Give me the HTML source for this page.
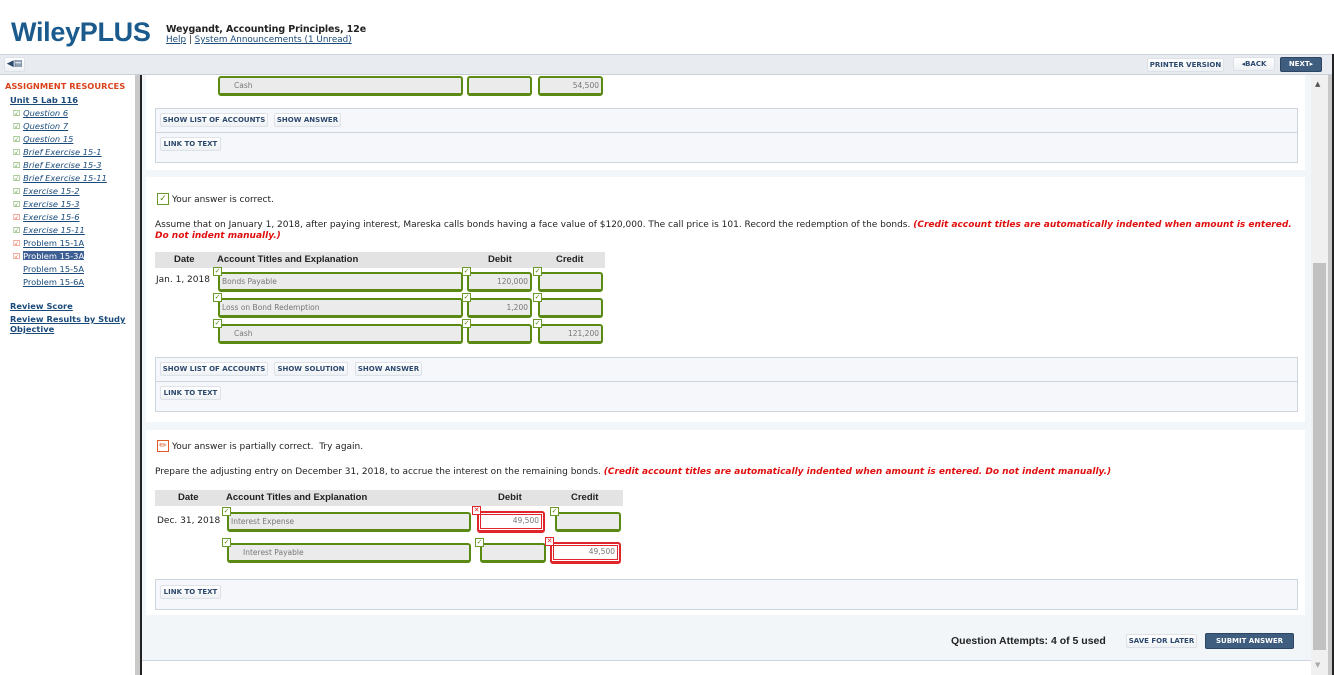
<!DOCTYPE html>
<html><head><meta charset="utf-8">
<style>
*{margin:0;padding:0;box-sizing:border-box}
body{width:1334px;height:675px;overflow:hidden;background:#fff;font-family:"DejaVu Sans",Verdana,sans-serif;font-size:9px;color:#222;position:relative}
.a{position:absolute}
a{color:#1a4a7a}
.logo{left:11px;top:17px;font-family:"Liberation Sans",Arial,sans-serif;font-weight:bold;font-size:27px;color:#1a5a8c;letter-spacing:-0.3px}
.tb{left:0;top:54px;width:1334px;height:21px;background:#e8ecf0;border-top:1px solid #cfd6dd;border-bottom:1px solid #c8d0d8}
.btn{position:absolute;height:14px;border:1px solid #dde2e8;background:linear-gradient(#fff,#eef1f4);font-size:7px;font-weight:bold;color:#2d4a6e;line-height:12px;text-align:center;border-radius:2px;white-space:nowrap}
.dk{background:#3f5d7e;color:#fff;border-color:#2b4562}
.side{left:0;top:75px;width:135px;height:600px}
.side div{position:absolute;left:10px;font-size:8.3px;white-space:nowrap}
.sb{left:135px;top:75px;width:5px;height:600px;background:#c9c9c9}
.sl{left:140px;top:75px;width:2px;height:600px;background:#222}
.main{left:142px;top:75px;width:1169px;height:600px;background:#f3f6f9}
.blk{position:absolute;left:4px;width:1159px;background:#fff}
.box{position:absolute;left:9px;width:1143px;border:1px solid #cdd5df;background:#f5f7fa}
.f{position:absolute;height:20px;border:2px solid #5b8a14;border-bottom-width:3px;border-radius:3px;background:#ebebeb;font-size:7.5px;color:#777;line-height:15px;padding:0 2px}
.r{border-color:#e0262a;background:#fff;box-shadow:inset 0 0 0 1px #fff,inset 0 0 0 2px #e0262a;text-align:right;padding-right:4px}
.ck{position:absolute;width:9px;height:9px;border:1px solid #6a9a2a;background:#fff;font-size:7px;line-height:7px;color:#5b8a14;text-align:center}
.x{border-color:#e0262a;color:#e0262a;font-weight:bold}
.hd{position:absolute;left:13px;height:16px;background:#e3e3e3;font-family:"Liberation Sans",sans-serif;font-weight:bold;font-size:9.5px;line-height:16px}
.hd span{position:absolute}
.red{color:#e01010;font-weight:bold;font-style:italic}
.p{position:absolute;left:13px;font-size:9px;white-space:nowrap}
.scr{left:1311px;top:75px;width:17px;height:600px;background:#f0f0f0}
</style></head><body>
<div class="a logo">WileyPLUS</div>
<div class="a" style="left:166px;top:24px;font-size:9.5px;font-weight:bold;letter-spacing:-0.1px">Weygandt, Accounting Principles, 12e</div>
<div class="a" style="left:166px;top:35px;font-size:8.8px"><a href="#">Help</a> | <a href="#">System Announcements (1 Unread)</a></div>
<div class="a tb"></div>
<div class="btn" style="left:4px;top:57px;width:21px;height:15px;font-size:9px;line-height:12px">&#9664;&#9636;</div>
<div class="btn" style="left:1147px;top:58px;width:77px">PRINTER VERSION</div>
<div class="btn" style="left:1233px;top:57px;width:42px">&#9666;BACK</div>
<div class="btn dk" style="left:1280px;top:57px;width:42px;height:15px">NEXT&#9656;</div>

<div class="a side">
<div style="left:5px;top:6px;color:#d9431c;font-weight:bold">ASSIGNMENT RESOURCES</div>
<div style="top:20px;font-weight:bold"><a href="#">Unit 5 Lab 116</a></div>
<div style="left:13px;top:33px;color:#5a9a3a">&#9745; <a href="#"><i>Question 6</i></a></div>
<div style="left:13px;top:46px;color:#5a9a3a">&#9745; <a href="#"><i>Question 7</i></a></div>
<div style="left:13px;top:59px;color:#5a9a3a">&#9745; <a href="#"><i>Question 15</i></a></div>
<div style="left:13px;top:72px;color:#5a9a3a">&#9745; <a href="#"><i>Brief Exercise 15-1</i></a></div>
<div style="left:13px;top:85px;color:#5a9a3a">&#9745; <a href="#"><i>Brief Exercise 15-3</i></a></div>
<div style="left:13px;top:98px;color:#5a9a3a">&#9745; <a href="#"><i>Brief Exercise 15-11</i></a></div>
<div style="left:13px;top:111px;color:#5a9a3a">&#9745; <a href="#"><i>Exercise 15-2</i></a></div>
<div style="left:13px;top:124px;color:#5a9a3a">&#9745; <a href="#"><i>Exercise 15-3</i></a></div>
<div style="left:13px;top:137px;color:#e05a3a">&#9745; <a href="#"><i>Exercise 15-6</i></a></div>
<div style="left:13px;top:150px;color:#5a9a3a">&#9745; <a href="#"><i>Exercise 15-11</i></a></div>
<div style="left:13px;top:163px;color:#e05a3a">&#9745; <a href="#">Problem 15-1A</a></div>
<div style="left:13px;top:176px;color:#e05a3a">&#9745; <span style="background:#3d5f94;color:#fff;text-decoration:underline">Problem 15-3A</span></div>
<div style="left:23px;top:189px"><a href="#">Problem 15-5A</a></div>
<div style="left:23px;top:202px"><a href="#">Problem 15-6A</a></div>
<div style="top:226px;font-weight:bold"><a href="#">Review Score</a></div>
<div style="top:239px;font-weight:bold"><a href="#">Review Results by Study</a></div>
<div style="top:249px;font-weight:bold"><a href="#">Objective</a></div>
</div>
<div class="a sb"></div><div class="a sl"></div>

<div class="a main">
 <div class="blk" style="top:0;height:95px">
  <div class="f" style="left:72px;top:1px;width:245px;padding-left:14px">Cash</div>
  <div class="f" style="left:321px;top:1px;width:65px"></div>
  <div class="f" style="left:392px;top:1px;width:65px;text-align:right">54,500</div>
  <div class="box" style="top:33px;height:55px">
   <div class="btn" style="left:4px;top:4px;width:108px">SHOW LIST OF ACCOUNTS</div>
   <div class="btn" style="left:118px;top:4px;width:67px">SHOW ANSWER</div>
   <div style="position:absolute;left:0;top:23px;width:100%;border-top:1px solid #cdd5df"></div>
   <div class="btn" style="left:4px;top:28px;width:61px">LINK TO TEXT</div>
  </div>
 </div>
 <div class="blk" style="top:102px;height:245px">
  <div class="ck" style="left:11px;top:16px;width:12px;height:12px;font-size:9px;line-height:10px">&#10003;</div>
  <div class="p" style="left:26px;top:18px">Your answer is correct.</div>
  <div class="p" style="left:9px;top:43px">Assume that on January 1, 2018, after paying interest, Mareska calls bonds having a face value of $120,000. The call price is 101. Record the redemption of the bonds. <span class="red">(Credit account titles are automatically indented when amount is entered.</span></div>
  <div class="p red" style="left:9px;top:54px">Do not indent manually.)</div>
  <div class="hd" style="left:9px;top:75px;width:450px"><span style="left:19px">Date</span><span style="left:62px">Account Titles and Explanation</span><span style="left:333px">Debit</span><span style="left:401px">Credit</span></div>
  <div class="p" style="left:10px;top:98px">Jan. 1, 2018</div>
  <div class="f" style="left:72px;top:95px;width:245px">Bonds Payable</div>
  <div class="f" style="left:321px;top:95px;width:65px;text-align:right">120,000</div>
  <div class="f" style="left:392px;top:95px;width:65px"></div>
  <div class="f" style="left:72px;top:121px;width:245px">Loss on Bond Redemption</div>
  <div class="f" style="left:321px;top:121px;width:65px;text-align:right">1,200</div>
  <div class="f" style="left:392px;top:121px;width:65px"></div>
  <div class="f" style="left:72px;top:147px;width:245px;padding-left:14px">Cash</div>
  <div class="f" style="left:321px;top:147px;width:65px"></div>
  <div class="f" style="left:392px;top:147px;width:65px;text-align:right">121,200</div>
  <div class="ck" style="left:67px;top:90px">&#10003;</div><div class="ck" style="left:316px;top:90px">&#10003;</div><div class="ck" style="left:387px;top:90px">&#10003;</div>
  <div class="ck" style="left:67px;top:116px">&#10003;</div><div class="ck" style="left:316px;top:116px">&#10003;</div><div class="ck" style="left:387px;top:116px">&#10003;</div>
  <div class="ck" style="left:67px;top:142px">&#10003;</div><div class="ck" style="left:316px;top:142px">&#10003;</div><div class="ck" style="left:387px;top:142px">&#10003;</div>
  <div class="box" style="left:9px;top:180px;height:55px">
   <div class="btn" style="left:4px;top:4px;width:108px">SHOW LIST OF ACCOUNTS</div>
   <div class="btn" style="left:118px;top:4px;width:74px">SHOW SOLUTION</div>
   <div class="btn" style="left:199px;top:4px;width:67px">SHOW ANSWER</div>
   <div style="position:absolute;left:0;top:23px;width:100%;border-top:1px solid #cdd5df"></div>
   <div class="btn" style="left:4px;top:28px;width:61px">LINK TO TEXT</div>
  </div>
 </div>
 <div class="blk" style="top:355px;height:185px">
  <div class="ck x" style="left:11px;top:10px;width:12px;height:12px;font-size:9px;line-height:10px;color:#e05a2a;border-color:#e05a2a">&#9999;</div>
  <div class="p" style="left:26px;top:12px">Your answer is partially correct.&nbsp; Try again.</div>
  <div class="p" style="left:9px;top:37px">Prepare the adjusting entry on December 31, 2018, to accrue the interest on the remaining bonds. <span class="red">(Credit account titles are automatically indented when amount is entered. Do not indent manually.)</span></div>
  <div class="hd" style="left:9px;top:60px;width:468px"><span style="left:23px">Date</span><span style="left:71px">Account Titles and Explanation</span><span style="left:343px">Debit</span><span style="left:416px">Credit</span></div>
  <div class="p" style="left:11px;top:86px">Dec. 31, 2018</div>
  <div class="f" style="left:81px;top:82px;width:244px">Interest Expense</div>
  <div class="f r" style="left:331px;top:81px;width:68px;height:22px">49,500</div>
  <div class="f" style="left:409px;top:82px;width:66px"></div>
  <div class="f" style="left:81px;top:113px;width:244px;padding-left:14px">Interest Payable</div>
  <div class="f" style="left:334px;top:113px;width:66px"></div>
  <div class="f r" style="left:404px;top:112px;width:71px;height:22px">49,500</div>
  <div class="ck" style="left:76px;top:77px">&#10003;</div><div class="ck x" style="left:326px;top:76px">&#10005;</div><div class="ck" style="left:404px;top:77px">&#10003;</div>
  <div class="ck" style="left:76px;top:108px">&#10003;</div><div class="ck" style="left:329px;top:108px">&#10003;</div><div class="ck x" style="left:399px;top:107px">&#10005;</div>
  <div class="box" style="left:9px;top:149px;height:31px">
   <div class="btn" style="left:4px;top:5px;width:61px">LINK TO TEXT</div>
  </div>
 </div>
 <div class="a" style="left:809px;top:560px;font-family:'Liberation Sans',sans-serif;font-weight:bold;font-size:10.5px;white-space:nowrap">Question Attempts: 4 of 5 used</div>
 <div class="btn" style="left:984px;top:559px;width:71px">SAVE FOR LATER</div>
 <div class="btn dk" style="left:1063px;top:558px;width:89px;height:16px;line-height:14px">SUBMIT ANSWER</div>
 <div class="a" style="left:0;top:585px;width:1169px;height:15px;background:#fff;border-top:1px solid #cdd5df"></div>
</div>
<div class="a scr"><div class="a" style="left:4px;top:5px;font-size:7px;color:#555">&#9650;</div><div class="a" style="left:2px;top:188px;width:13px;height:387px;background:#c1c1c1"></div><div class="a" style="left:4px;top:586px;font-size:7px;color:#aaa">&#9660;</div></div>
<div class="a" style="left:1328px;top:75px;width:4px;height:600px;background:#c8c8c8"></div>
<div class="a" style="left:1332px;top:54px;width:2px;height:621px;background:#222"></div>
</body></html>
